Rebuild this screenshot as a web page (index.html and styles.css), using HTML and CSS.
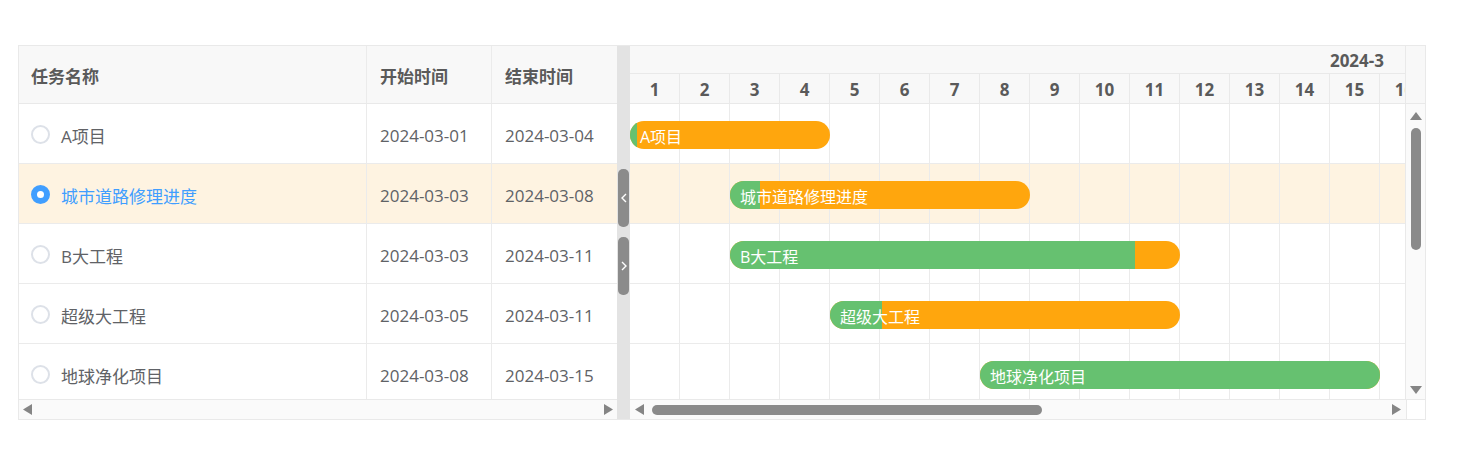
FILE: index.html
```html
<!DOCTYPE html>
<html lang="zh-CN">
<head>
<meta charset="utf-8">
<title>Gantt</title>
<link rel="stylesheet" href="styles.css">
</head>
<body>
<div class="gantt">
  <div class="left">
    <div class="thead">
      <div class="cell c-name">任务名称</div>
      <div class="cell c-date">开始时间</div>
      <div class="cell c-date last">结束时间</div>
    </div>
    <div class="tbody">
      <div class="trow">
        <div class="cell c-name"><span class="radio"></span><span>A项目</span></div>
        <div class="cell c-date">2024-03-01</div>
        <div class="cell c-date last">2024-03-04</div>
      </div>
      <div class="trow selected">
        <div class="cell c-name active"><span class="radio checked"></span><span>城市道路修理进度</span></div>
        <div class="cell c-date">2024-03-03</div>
        <div class="cell c-date last">2024-03-08</div>
      </div>
      <div class="trow">
        <div class="cell c-name"><span class="radio"></span><span>B大工程</span></div>
        <div class="cell c-date">2024-03-03</div>
        <div class="cell c-date last">2024-03-11</div>
      </div>
      <div class="trow">
        <div class="cell c-name"><span class="radio"></span><span>超级大工程</span></div>
        <div class="cell c-date">2024-03-05</div>
        <div class="cell c-date last">2024-03-11</div>
      </div>
      <div class="trow">
        <div class="cell c-name"><span class="radio"></span><span>地球净化项目</span></div>
        <div class="cell c-date">2024-03-08</div>
        <div class="cell c-date last">2024-03-15</div>
      </div>
    </div>
    <div class="hscroll hs-left">
      <svg class="arrow" width="9" height="11" viewBox="0 0 9 11"><path d="M9 0V11L0 5.5Z" fill="#858585"/></svg>
      <div class="track"></div>
      <svg class="arrow" width="9" height="11" viewBox="0 0 9 11"><path d="M0 0V11L9 5.5Z" fill="#858585"/></svg>
    </div>
  </div>

  <div class="splitter">
    <div class="split-btn"><svg width="6" height="10" viewBox="0 0 6 10"><path d="M5 1L1 5L5 9" fill="none" stroke="#fff" stroke-width="1.4"/></svg></div>
    <div class="split-btn"><svg width="6" height="10" viewBox="0 0 6 10"><path d="M1 1L5 5L1 9" fill="none" stroke="#fff" stroke-width="1.4"/></svg></div>
  </div>

  <div class="right">
    <div class="chead">
      <div class="timehead">
        <div class="yearrow">2024-3</div>
        <div class="dayrow">
          <div class="day">1</div><div class="day">2</div><div class="day">3</div><div class="day">4</div>
          <div class="day">5</div><div class="day">6</div><div class="day">7</div><div class="day">8</div>
          <div class="day">9</div><div class="day">10</div><div class="day">11</div><div class="day">12</div>
          <div class="day">13</div><div class="day">14</div><div class="day">15</div><div class="day">16</div>
        </div>
      </div>
      <div class="corner-top"></div>
    </div>
    <div class="cbody">
      <div class="timeline">
        <div class="crow">
          <div class="bar" style="left:0px;width:200px"><div class="progress" style="width:7px"></div><span class="label">A项目</span></div>
        </div>
        <div class="crow selected">
          <div class="bar" style="left:100px;width:300px"><div class="progress" style="width:30px"></div><span class="label">城市道路修理进度</span></div>
        </div>
        <div class="crow">
          <div class="bar" style="left:100px;width:450px"><div class="progress" style="width:405px"></div><span class="label">B大工程</span></div>
        </div>
        <div class="crow">
          <div class="bar" style="left:200px;width:350px"><div class="progress" style="width:52px"></div><span class="label">超级大工程</span></div>
        </div>
        <div class="crow">
          <div class="bar" style="left:350px;width:400px"><div class="progress" style="width:400px"></div><span class="label">地球净化项目</span></div>
        </div>
      </div>
      <div class="vscroll">
        <svg class="varrow" width="12" height="8" viewBox="0 0 12 8"><path d="M0 8H12L6 0Z" fill="#858585"/></svg>
        <div class="vtrack"><div class="vthumb"></div></div>
        <svg class="varrow" width="12" height="8" viewBox="0 0 12 8"><path d="M0 0H12L6 8Z" fill="#858585"/></svg>
      </div>
    </div>
    <div class="cfoot">
      <div class="hscroll hs-right">
        <svg class="arrow" width="9" height="11" viewBox="0 0 9 11"><path d="M9 0V11L0 5.5Z" fill="#858585"/></svg>
        <div class="track"><div class="hthumb"></div></div>
        <svg class="arrow" width="9" height="11" viewBox="0 0 9 11"><path d="M0 0V11L9 5.5Z" fill="#858585"/></svg>
      </div>
      <div class="corner-bottom"></div>
    </div>
  </div>
</div>
</body>
</html>
```

FILE: styles.css
```css
* { box-sizing: border-box; }

body {
  margin: 0;
  background: #fff;
  font-family: "Open Sans", "Noto Sans CJK SC", sans-serif;
  color: #606266;
}

.gantt {
  margin: 45px 0 0 18px;
  width: 1408px;
  height: 375px;
  border: 1px solid #e9e9e9;
  display: flex;
}

/* left table */
.left {
  width: 598px;
  display: flex;
  flex-direction: column;
}

.thead {
  height: 58px;
  display: flex;
  background: #f8f8f8;
  border-bottom: 1px solid #e9e9e9;
}

.thead .cell {
  font-weight: 700;
  color: #5a5a5a;
  padding-top: 2px;
}

.cell {
  display: flex;
  align-items: center;
  font-size: 17px;
  border-right: 1px solid #ebebeb;
  padding-left: 13px;
  white-space: nowrap;
}

.cell.last { border-right: none; }

.c-name { width: 348px; padding-left: 12px; }
.c-date { width: 125px; }
.c-date.last { width: 125px; }

.tbody {
  height: 295px;
  overflow: hidden;
}

.trow {
  height: 60px;
  display: flex;
  border-bottom: 1px solid #ebebeb;
}

.trow .cell { padding-top: 3px; }

.trow.selected, .crow.selected { background-color: #fef3e1; }

.c-name.active { color: #409eff; }

.radio {
  width: 19px;
  height: 19px;
  border-radius: 50%;
  border: 2px solid #dde1e8;
  background: #fff;
  margin-right: 11px;
  flex: none;
  display: flex;
  align-items: center;
  justify-content: center;
  margin-top: -1px;
}

.radio.checked {
  border-color: #409eff;
  background: #409eff;
}

.radio.checked::after {
  content: "";
  width: 7px;
  height: 7px;
  border-radius: 50%;
  background: #fff;
}

/* scrollbars */
.hscroll {
  height: 20px;
  background: #fafafa;
  border-top: 1px solid #e9e9e9;
  display: flex;
  align-items: center;
}

.hs-left { padding: 0 4px 0 4px; }
.hs-right { width: 776px; padding: 0 5px 0 5px; }

.hscroll .arrow { flex: none; }

.track {
  flex: 1;
  display: flex;
  align-items: center;
  height: 10px;
}

.hthumb {
  margin-left: 8px;
  width: 390px;
  height: 10px;
  border-radius: 5px;
  background: #8a8a8a;
}

/* splitter */
.splitter {
  width: 13px;
  background: #e3e3e3;
  display: flex;
  flex-direction: column;
  align-items: center;
  padding-top: 123px;
  gap: 10px;
}

.split-btn {
  width: 11px;
  height: 58px;
  border-radius: 5px;
  background: #8b8b8b;
  display: flex;
  align-items: center;
  justify-content: center;
}

/* chart */
.right {
  width: 795px;
  display: flex;
  flex-direction: column;
}

.chead {
  height: 58px;
  display: flex;
}

.timehead {
  width: 776px;
  background: #f8f8f8;
  border-right: 1px solid #e9e9e9;
  display: flex;
  flex-direction: column;
  overflow: hidden;
}

.yearrow {
  height: 28px;
  border-bottom: 1px solid #e9e9e9;
  display: flex;
  align-items: center;
  justify-content: flex-end;
  padding-right: 21px;
  padding-top: 2px;
  font-size: 17px;
  font-weight: 700;
  color: #5a5a5a;
}

.dayrow {
  height: 30px;
  display: flex;
  border-bottom: 1px solid #e9e9e9;
}

.day {
  width: 50px;
  flex: none;
  border-right: 1px solid #e9e9e9;
  display: flex;
  align-items: center;
  justify-content: center;
  padding-top: 2px;
  font-size: 17px;
  font-weight: 700;
  color: #5a5a5a;
}

.corner-top {
  flex: 1;
  background: #f8f8f8;
  border-bottom: 1px solid #e9e9e9;
}

.cbody {
  height: 295px;
  display: flex;
}

.timeline {
  width: 776px;
  overflow: hidden;
  border-right: 1px solid #e9e9e9;
}

.crow {
  position: relative;
  height: 60px;
  border-bottom: 1px solid #ebebeb;
  background-image: repeating-linear-gradient(to right, transparent 0 49px, #ebebeb 49px 50px);
}

.bar {
  position: absolute;
  top: 17px;
  height: 28px;
  border-radius: 14px;
  background: #ffa60d;
  overflow: hidden;
  display: flex;
  align-items: center;
}

.progress {
  position: absolute;
  left: 0;
  top: 0;
  bottom: 0;
  background: #66c170;
}

.label {
  position: relative;
  padding-left: 10px;
  padding-top: 1px;
  color: #fff;
  font-size: 16px;
  white-space: nowrap;
}

.vscroll {
  flex: 1;
  background: #fafafa;
  display: flex;
  flex-direction: column;
  align-items: center;
  padding: 8px 0 5px 0;
}

.varrow { flex: none; }

.vtrack {
  flex: 1;
  width: 10px;
}

.vthumb {
  margin-top: 8px;
  width: 10px;
  height: 122px;
  border-radius: 5px;
  background: #8a8a8a;
}

.cfoot {
  height: 20px;
  display: flex;
}

.corner-bottom {
  flex: 1;
  border-top: 1px solid #e9e9e9;
  border-left: 1px solid #e9e9e9;
  background: #fff;
}
```
